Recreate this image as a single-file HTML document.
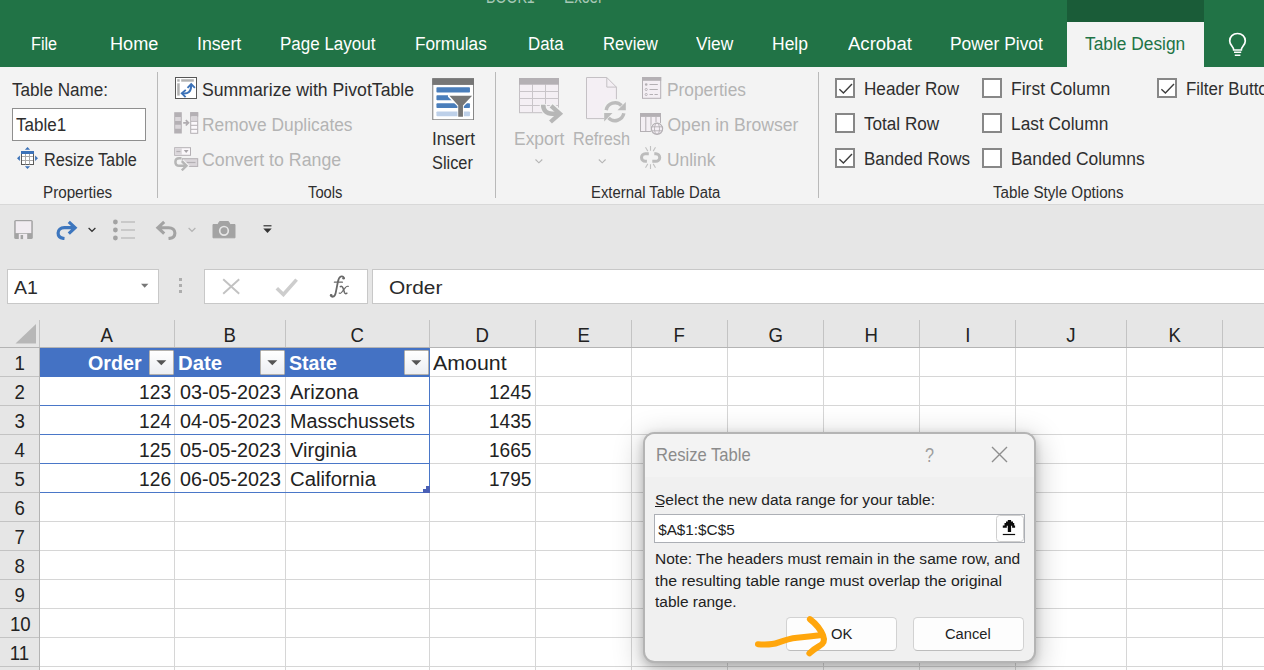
<!DOCTYPE html>
<html><head><meta charset="utf-8"><title>Excel - Resize Table</title>
<style>
html,body{margin:0;padding:0;}
body{width:1264px;height:670px;overflow:hidden;background:#e6e6e6;font-family:"Liberation Sans",sans-serif;}
#app{position:relative;width:1264px;height:670px;overflow:hidden;}
#app div.b,#app svg,#app .t{position:absolute;}
.t{white-space:nowrap;line-height:0;transform-origin:0 0;display:block;}
</style></head>
<body>
<div id="app">
<div class="b" style="left:0px;top:0px;width:1264px;height:67px;background:#217346;"></div>
<div class="b" style="left:1067px;top:0px;width:137px;height:22px;background:#1a5c38;"></div>
<div class="b" style="left:1067px;top:22px;width:137px;height:46px;background:#f3f3f3;"></div>
<span class="t" style="left:485.65px;top:-3.11px;font-size:17.60px;color:#a6c7b5;transform:scaleX(0.8030);">BOOK1</span>
<span class="t" style="left:564.05px;top:-3.11px;font-size:17.60px;color:#a6c7b5;transform:scaleX(0.8668);">Excel</span>
<span class="t" style="left:31.25px;top:43.89px;font-size:17.60px;color:#ffffff;transform:scaleX(0.9205);">File</span>
<span class="t" style="left:109.85px;top:43.89px;font-size:17.60px;color:#ffffff;transform:scaleX(1.0307);">Home</span>
<span class="t" style="left:197.05px;top:43.89px;font-size:17.60px;color:#ffffff;transform:scaleX(1.0064);">Insert</span>
<span class="t" style="left:280.45px;top:43.89px;font-size:17.60px;color:#ffffff;transform:scaleX(0.9652);">Page Layout</span>
<span class="t" style="left:415.35px;top:43.89px;font-size:17.60px;color:#ffffff;transform:scaleX(0.9788);">Formulas</span>
<span class="t" style="left:527.65px;top:43.89px;font-size:17.60px;color:#ffffff;transform:scaleX(0.9573);">Data</span>
<span class="t" style="left:602.95px;top:43.89px;font-size:17.60px;color:#ffffff;transform:scaleX(0.9487);">Review</span>
<span class="t" style="left:695.95px;top:43.89px;font-size:17.60px;color:#ffffff;transform:scaleX(0.9848);">View</span>
<span class="t" style="left:772.35px;top:43.89px;font-size:17.60px;color:#ffffff;transform:scaleX(0.9944);">Help</span>
<span class="t" style="left:847.75px;top:43.89px;font-size:17.60px;color:#ffffff;transform:scaleX(1.0536);">Acrobat</span>
<span class="t" style="left:950.45px;top:43.89px;font-size:17.60px;color:#ffffff;transform:scaleX(0.9894);">Power Pivot</span>
<span class="t" style="left:1084.95px;top:43.89px;font-size:17.60px;color:#217346;transform:scaleX(0.9848);">Table Design</span>
<svg style="left:1226px;top:31px;" width="24" height="27" viewBox="0 0 24 27"><path d="M11.5 2.5c-4.6 0-7.8 3.4-7.8 7.4 0 2.6 1.3 4.2 2.5 5.6 1 1.200 1.500 2.100 1.500 3.500h7.600c0-1.400.5-2.300 1.500-3.500 1.200-1.400 2.500-3 2.500-5.600 0-4-3.200-7.400-7.800-7.400z" fill="none" stroke="#fff" stroke-width="1.7"/><path d="M8 21.300h7.200M8.800 24.200h5.600" stroke="#fff" stroke-width="1.600" fill="none"/></svg>
<div class="b" style="left:0px;top:67px;width:1264px;height:137px;background:#f3f3f3;"></div>
<div class="b" style="left:0px;top:204px;width:1264px;height:1px;background:#d8d8d8;"></div>
<div class="b" style="left:157px;top:72px;width:1px;height:126px;background:#b9b9b9;"></div>
<div class="b" style="left:495px;top:72px;width:1px;height:126px;background:#b9b9b9;"></div>
<div class="b" style="left:818px;top:72px;width:1px;height:126px;background:#b9b9b9;"></div>
<span class="t" style="left:12.15px;top:89.79px;font-size:17.60px;color:#2e2e2e;transform:scaleX(0.9726);">Table Name:</span>
<div class="b" style="left:12px;top:108px;width:134px;height:33px;background:#fff;border:1px solid #8f8f8f;box-sizing:border-box;"></div>
<span class="t" style="left:15.65px;top:125.39px;font-size:17.60px;color:#2e2e2e;transform:scaleX(0.9679);">Table1</span>
<span class="t" style="left:44.45px;top:159.69px;font-size:17.60px;color:#2e2e2e;transform:scaleX(0.9249);">Resize Table</span>
<span class="t" style="left:42.65px;top:192.95px;font-size:16.00px;color:#2e2e2e;transform:scaleX(0.9489);">Properties</span>
<span class="t" style="left:201.55px;top:89.79px;font-size:17.60px;color:#2e2e2e;transform:scaleX(1.0039);">Summarize with PivotTable</span>
<span class="t" style="left:202.15px;top:124.89px;font-size:17.60px;color:#b4b4b4;transform:scaleX(0.9869);">Remove Duplicates</span>
<span class="t" style="left:202.15px;top:159.69px;font-size:17.60px;color:#b4b4b4;transform:scaleX(1.0091);">Convert to Range</span>
<span class="t" style="left:308.15px;top:192.95px;font-size:16.00px;color:#2e2e2e;transform:scaleX(0.9238);">Tools</span>
<span class="t" style="left:432.15px;top:139.19px;font-size:17.60px;color:#2e2e2e;transform:scaleX(0.9769);">Insert</span>
<span class="t" style="left:432.25px;top:162.99px;font-size:17.60px;color:#2e2e2e;transform:scaleX(0.9292);">Slicer</span>
<span class="t" style="left:513.75px;top:139.19px;font-size:17.60px;color:#b4b4b4;transform:scaleX(0.9909);">Export</span>
<span class="t" style="left:573.45px;top:139.19px;font-size:17.60px;color:#b4b4b4;transform:scaleX(0.9267);">Refresh</span>
<span class="t" style="left:667.45px;top:89.79px;font-size:17.60px;color:#b4b4b4;transform:scaleX(0.9848);">Properties</span>
<span class="t" style="left:667.45px;top:124.89px;font-size:17.60px;color:#b4b4b4;">Open in Browser</span>
<span class="t" style="left:667.45px;top:159.69px;font-size:17.60px;color:#b4b4b4;transform:scaleX(0.9889);">Unlink</span>
<span class="t" style="left:591.45px;top:192.95px;font-size:16.00px;color:#2e2e2e;transform:scaleX(0.9285);">External Table Data</span>
<span class="t" style="left:863.55px;top:88.99px;font-size:17.60px;color:#2e2e2e;transform:scaleX(0.9737);">Header Row</span>
<span class="t" style="left:863.55px;top:123.99px;font-size:17.60px;color:#2e2e2e;transform:scaleX(0.9726);">Total Row</span>
<span class="t" style="left:863.55px;top:158.99px;font-size:17.60px;color:#2e2e2e;transform:scaleX(0.9674);">Banded Rows</span>
<span class="t" style="left:1010.75px;top:88.99px;font-size:17.60px;color:#2e2e2e;transform:scaleX(0.9954);">First Column</span>
<span class="t" style="left:1010.75px;top:123.99px;font-size:17.60px;color:#2e2e2e;transform:scaleX(0.9848);">Last Column</span>
<span class="t" style="left:1010.75px;top:158.99px;font-size:17.60px;color:#2e2e2e;transform:scaleX(0.9903);">Banded Columns</span>
<span class="t" style="left:1185.65px;top:88.99px;font-size:17.60px;color:#2e2e2e;transform:scaleX(0.9612);">Filter Button</span>
<span class="t" style="left:993.25px;top:192.95px;font-size:16.00px;color:#2e2e2e;transform:scaleX(0.9474);">Table Style Options</span>
<div class="b" style="left:835px;top:78px;width:20px;height:20px;background:#fff;border:2px solid #878787;box-sizing:border-box;"><svg width="20" height="20" viewBox="0 0 20 20" style="position:absolute;left:-2px;top:-2px"><path d="M4.400 11.200l4 3.800L17 6" fill="none" stroke="#3d3d3d" stroke-width="1.400"/></svg></div>
<div class="b" style="left:835px;top:113px;width:20px;height:20px;background:#fff;border:2px solid #878787;box-sizing:border-box;"></div>
<div class="b" style="left:835px;top:148px;width:20px;height:20px;background:#fff;border:2px solid #878787;box-sizing:border-box;"><svg width="20" height="20" viewBox="0 0 20 20" style="position:absolute;left:-2px;top:-2px"><path d="M4.400 11.200l4 3.800L17 6" fill="none" stroke="#3d3d3d" stroke-width="1.400"/></svg></div>
<div class="b" style="left:982px;top:78px;width:20px;height:20px;background:#fff;border:2px solid #878787;box-sizing:border-box;"></div>
<div class="b" style="left:982px;top:113px;width:20px;height:20px;background:#fff;border:2px solid #878787;box-sizing:border-box;"></div>
<div class="b" style="left:982px;top:148px;width:20px;height:20px;background:#fff;border:2px solid #878787;box-sizing:border-box;"></div>
<div class="b" style="left:1157px;top:78px;width:20px;height:20px;background:#fff;border:2px solid #878787;box-sizing:border-box;"><svg width="20" height="20" viewBox="0 0 20 20" style="position:absolute;left:-2px;top:-2px"><path d="M4.400 11.200l4 3.800L17 6" fill="none" stroke="#3d3d3d" stroke-width="1.400"/></svg></div>
<svg style="left:16px;top:146px;" width="23" height="24" viewBox="0 0 23 24"><rect x="5.500" y="5.500" width="12" height="13" fill="#fff" stroke="#5a5a5a" stroke-width="1"/><path d="M9.500 8v10.500M13.500 8v10.500M6 10.500h11M6 14.500h11" stroke="#a9a9a9" stroke-width="1"/><rect x="5" y="5" width="13" height="3" fill="#3c72b8"/><path d="M11.500 1l2.600 2.800H8.900zM11.500 22.900l2.600-2.700H8.900zM1 12.300l2.900-2.700v5.400zM22 12.300l-2.900-2.700v5.400z" fill="#3c72b8"/></svg>
<svg style="left:174px;top:76px;" width="24" height="24" viewBox="0 0 24 24"><g transform="translate(0.5 0.5)"><rect x="1" y="1" width="21" height="21" fill="#fff" stroke="#565656" stroke-width="1"/><rect x="2.700" y="2.700" width="2.500" height="2.500" fill="#b2b2b2"/><rect x="6.700" y="2.700" width="12.600" height="2.500" fill="#b2b2b2"/><rect x="2.700" y="6.800" width="2.500" height="12.300" fill="#b2b2b2"/><g transform="translate(0 .8)"><path d="M7.600 16.100c6.200.9 9.100-1.800 9.100-8.400" fill="none" stroke="#3c72b8" stroke-width="2"/><path d="M11.300 12.600l-4 3.500 3.800 3.700" fill="none" stroke="#3c72b8" stroke-width="1.900"/><path d="M13 10.600l3.700-3.800 3.700 3.800" fill="none" stroke="#3c72b8" stroke-width="1.900"/></g></g></svg>
<svg style="left:174px;top:112px;" width="25" height="22" viewBox="0 0 25 22"><rect x=".2" y=".2" width="7.600" height="21.300" fill="#b4b0b4"/><path d="M1.200 5h5.600v4H1.200zM1.200 12.800h5.600v4H1.200z" fill="#dad6da"/><path d="M9.200 10.800h5M11.800 8.100l2.700 2.700-2.700 2.700" stroke="#b0acb0" stroke-width="1.700" fill="none"/><rect x="16.700" y=".7" width="7" height="20.600" fill="#fbf8fb" stroke="#b4b0b4" stroke-width="1"/><rect x="16.200" y=".2" width="8" height="4.300" fill="#b4b0b4"/><rect x="17.200" y="4.900" width="6" height="3.900" fill="#dad6da"/><path d="M17 9.300h6.500M17 13.300h6.500M17 17.300h6.500" stroke="#b4b0b4" stroke-width="1"/></svg>
<svg style="left:174px;top:147px;" width="25" height="24" viewBox="0 0 25 24"><rect x=".7" y=".7" width="15.800" height="7.600" fill="#fbf8fb" stroke="#b4b0b4" stroke-width="1"/><rect x="1.200" y="1.200" width="6.600" height="6.600" fill="#dad6da"/><path d="M2.400 4.500h4" stroke="#b4b0b4" stroke-width="1.200"/><path d="M9.800 3.100h4.800l-2.400 2.900z" fill="#a9a5a9"/><rect x="8.200" y="11.700" width="15.500" height="7.700" fill="#dad6da" stroke="#b4b0b4" stroke-width="1"/><path d="M12.500 15.500h9" stroke="#b4b0b4" stroke-width="1.200"/><path d="M7.500 11.300H5.300c-2.400 0-3.900 1.600-3.900 3.700s1.500 3.800 3.900 3.800h6" fill="none" stroke="#f3f3f3" stroke-width="4.600"/><path d="M7.800 14l4.800 4.700-4.800 4.600" fill="none" stroke="#f3f3f3" stroke-width="4.400"/><path d="M7.500 11.300H5.300c-2.400 0-3.900 1.600-3.900 3.700s1.500 3.800 3.900 3.800h6" fill="none" stroke="#b6b6b6" stroke-width="2.500"/><path d="M7.800 14.200l4.700 4.600-4.700 4.500" fill="none" stroke="#b6b6b6" stroke-width="2.400"/></svg>
<svg style="left:431.5px;top:77.5px;" width="42.4" height="42.6" viewBox="0 0 43 43" preserveAspectRatio="none"><rect x=".8" y=".8" width="41.400" height="41.400" fill="#fff" stroke="#7a7a7a" stroke-width="1"/><rect x=".3" y=".3" width="42.400" height="6.700" fill="#767676"/><g fill="#4a7ebb"><rect x="4.500" y="9.400" width="34" height="5.200" rx=".8"/><rect x="4.500" y="17.400" width="34" height="5" rx=".8"/><rect x="4.500" y="25.600" width="34" height="4.800" rx=".8"/></g><rect x="4.500" y="33.800" width="34" height="4.800" rx=".8" fill="#bdd0e9"/><path d="M16.200 16.700h25.500v2.300l-9.400 9.600v11.300h-6.500V28.600l-9.600-9.600z" fill="#fff"/><path d="M17.700 17.800h23L31.400 27.700v11.500h-4.800V27.700z" fill="#767676"/></svg>
<svg style="left:518px;top:77px;" width="47" height="47.5" viewBox="0 0 47 47.5"><g transform="translate(0.5 0.5)"><rect x="1" y="1" width="39" height="34.200" fill="#f4eff4" stroke="#c4c0c4" stroke-width="1"/><path d="M14 7v28M27 7v28M1 14h39M1 21h39M1 28h39" stroke="#c9c5c9" stroke-width="1"/><rect x=".5" y=".5" width="40" height="6.700" fill="#b4b0b4"/><path d="M24.700 26.500c0 6 3.300 9.700 9 9.700h7M32 27.500l9.500 8.700-9.800 8.700" fill="none" stroke="#f3f3f3" stroke-width="7"/><path d="M24.700 27.300c0 5.600 3.300 8.900 9 8.900h6.500" fill="none" stroke="#b7b7b7" stroke-width="4.600"/><path d="M32.600 28.400l8.800 7.800-9.400 8.300" fill="none" stroke="#b7b7b7" stroke-width="4.300"/></g></svg>
<svg style="left:585px;top:76px;" width="43" height="48" viewBox="0 0 43 48"><g transform="translate(0.5 0.5)"><path d="M1 1h20.300l9.600 9.600v31.500H1z" fill="#f4eff4" stroke="#c4c0c4" stroke-width="1"/><path d="M21.300 1v9.600H31" fill="none" stroke="#c4c0c4" stroke-width="1"/><circle cx="29.500" cy="35.200" r="12.600" fill="#f3f3f3"/><path d="M20.700 33.600a9 9 0 0 1 15.300-4.600" fill="none" stroke="#bcbcbc" stroke-width="3.500"/><path d="M38.300 36.800a9 9 0 0 1-15.300 4.600" fill="none" stroke="#bcbcbc" stroke-width="3.500"/><path d="M40.300 25.500v8.300h-8.300z" fill="#bcbcbc"/><path d="M18.700 44.900v-8.300h8.300z" fill="#bcbcbc"/></g></svg>
<svg style="left:534px;top:158px;" width="10" height="7" viewBox="0 0 10 7"><g transform="translate(0.5 0.5)"><path d="M1 1l3.400 3.300L7.800 1" fill="none" stroke="#b5b5b5" stroke-width="1.100"/></g></svg>
<svg style="left:597px;top:158px;" width="10" height="7" viewBox="0 0 10 7"><g transform="translate(0.8 0.5)"><path d="M1 1l3.400 3.300L7.800 1" fill="none" stroke="#b5b5b5" stroke-width="1.100"/></g></svg>
<svg style="left:641px;top:76px;" width="21.5" height="24" viewBox="0 0 21.5 24"><g transform="translate(0.5 0.5)"><rect x="1" y="1" width="18.200" height="20.800" fill="#f4eff4" stroke="#b4b0b4" stroke-width="1"/><rect x=".5" y=".5" width="19.200" height="3.800" fill="#b4b0b4"/><circle cx="4.700" cy="8" r="1.300" fill="#b4b0b4"/><circle cx="4.700" cy="13" r="1.100" fill="none" stroke="#b4b0b4" stroke-width=".9"/><circle cx="4.700" cy="18" r="1.100" fill="none" stroke="#b4b0b4" stroke-width=".9"/><path d="M8 8h8.300M8 13h8.300M8 18h3.500M13 18h3.300" stroke="#b4b0b4" stroke-width="1.100"/></g></svg>
<svg style="left:639px;top:112px;" width="25.5" height="24" viewBox="0 0 25.5 24"><g transform="translate(0.5 0.5)"><rect x="1" y="1" width="20" height="18" fill="#f4eff4" stroke="#b4b0b4" stroke-width="1"/><rect x=".5" y=".5" width="21" height="3.900" fill="#b4b0b4"/><path d="M6.300 4.500v14.300M11.500 4.500v14.300M16.500 4.500v14.300" stroke="#b4b0b4" stroke-width="1"/><circle cx="17.500" cy="16.300" r="6.800" fill="#f3f3f3"/><circle cx="17.500" cy="16.300" r="5.600" fill="#f4eff4" stroke="#b4b0b4" stroke-width="1.200"/><ellipse cx="17.500" cy="16.300" rx="2.500" ry="5.600" fill="none" stroke="#b4b0b4" stroke-width=".9"/><path d="M12 14.300h11M12 18.300h11" stroke="#b4b0b4" stroke-width=".9"/></g></svg>
<svg style="left:639px;top:145px;" width="23.5" height="25" viewBox="0 0 23.5 25"><g transform="translate(0.5 0.5)"><path d="M9.300 8.200H5.800a3.800 3.800 0 0 0 0 7.600h1.600" fill="none" stroke="#bcbcbc" stroke-width="3"/><path d="M12.800 15.800h3.600a3.800 3.800 0 0 0 0-7.600h-1.600" fill="none" stroke="#bcbcbc" stroke-width="3"/><path d="M11 .6v4.600M6 1.800l2.300 3.800M16 1.800l-2.300 3.800M11 23.400v-4.600M6 22.200l2.300-3.800M16 22.200l-2.300-3.800" stroke="#c2c2c2" stroke-width="1.100"/></g></svg>
<svg style="left:13px;top:219px;" width="22" height="22" viewBox="0 0 22 22"><rect x="1.200" y=".9" width="18.600" height="19.200" rx="1.600" fill="#a3a3a3"/><rect x="2.700" y="2.200" width="15.600" height="11.900" fill="#f1ecf1"/><rect x="5.800" y="14.800" width="8.400" height="5.300" fill="#efeaef"/><rect x="7.600" y="16" width="2.500" height="4.100" fill="#a3a3a3"/></svg>
<svg style="left:54px;top:219px;" width="26" height="24" viewBox="0 0 26 24"><path d="M14.800 2.800l6.300 5.900-6.300 5.900M20.500 8.700H10.300c-3.700 0-6.200 2.300-6.200 5.400 0 3 2.200 5 5.200 5.300l1.200.1" fill="none" stroke="#3d76be" stroke-width="3.200" stroke-linejoin="miter"/></svg>
<svg style="left:87px;top:226px;" width="10" height="8" viewBox="0 0 10 8"><path d="M1.600 2l3.400 3.300L8.400 2" fill="none" stroke="#333" stroke-width="1.200"/></svg>
<svg style="left:112px;top:218px;" width="25" height="24" viewBox="0 0 25 24"><g fill="#a3a3a3"><circle cx="3.400" cy="4" r="2.400"/><circle cx="3.400" cy="12" r="2.400"/><circle cx="3.400" cy="20" r="2.400"/></g><path d="M9 4h14M9 12h14M9 20h14" stroke="#ababab" stroke-width="1.200"/></svg>
<svg style="left:154px;top:219px;" width="26" height="24" viewBox="0 0 26 24"><path d="M10.200 2.800L3.900 8.700l6.300 5.900M4.500 8.700h10.200c3.700 0 6.200 2.300 6.200 5.400 0 3-2.200 5-5.200 5.300l-1.200.1" fill="none" stroke="#a3a3a3" stroke-width="3.100"/></svg>
<svg style="left:187px;top:226px;" width="10" height="8" viewBox="0 0 10 8"><path d="M1.600 2l3.400 3.300L8.400 2" fill="none" stroke="#b5b5b5" stroke-width="1.200"/></svg>
<svg style="left:212px;top:220px;" width="24" height="20" viewBox="0 0 24 20"><path d="M1 4.500h4.800l1.800-3h8.800l1.800 3H23v13.300H1z" fill="#a3a3a3" stroke="#a3a3a3" stroke-linejoin="round" stroke-width="1"/><circle cx="12" cy="10.800" r="4.300" fill="none" stroke="#e6e6e6" stroke-width="1.700"/></svg>
<svg style="left:262px;top:224px;" width="11" height="11" viewBox="0 0 11 11"><path d="M1.500 1.800h8" stroke="#333" stroke-width="1.200"/><path d="M1.300 4.500h8.400L5.500 9z" fill="#333"/></svg>
<div class="b" style="left:7px;top:269px;width:151.5px;height:35px;border:1px solid #c8c8c8;box-sizing:border-box;background:#fff;"></div>
<span class="t" style="left:13.95px;top:287.78px;font-size:18.80px;color:#2a2a2a;transform:scaleX(1.0395);">A1</span>
<svg style="left:140px;top:283px;" width="10" height="6" viewBox="0 0 10 6"><path d="M1 .8h7.400L4.700 4.800z" fill="#777"/></svg>
<div class="b" style="left:179px;top:278px;width:3px;height:3px;background:#adadad;"></div>
<div class="b" style="left:179px;top:284px;width:3px;height:3px;background:#adadad;"></div>
<div class="b" style="left:179px;top:290px;width:3px;height:3px;background:#adadad;"></div>
<div class="b" style="left:204px;top:269px;width:164px;height:35px;border:1px solid #c8c8c8;box-sizing:border-box;background:#fff;"></div>
<svg style="left:221px;top:277px;" width="22" height="19" viewBox="0 0 22 19"><path d="M2.200 2.200l16 14.600M18.200 2.200l-16 14.600" stroke="#c2c2c2" stroke-width="1.900" fill="none"/></svg>
<svg style="left:275px;top:277px;" width="24" height="20" viewBox="0 0 24 20"><path d="M1.800 11.200l6.600 6.300L21.600 2.600" stroke="#cdcdcd" stroke-width="3.600" fill="none"/></svg>
<svg style="left:328px;top:273px;" width="24" height="26" viewBox="0 0 24 26"><g fill="none" stroke="#686868" stroke-linecap="round"><path d="M15.800 5.100c-.3-1.500-1.700-2.100-3-1.600-1.700.7-2.400 2.700-2.900 5.200L7.700 19.800c-.5 2.300-1.300 3.700-2.800 3.900-1.100.2-1.900-.4-2.100-1.300" stroke-width="1.800"/><path d="M6.400 9.200h8" stroke-width="1.300"/><path d="M12.300 13.600c1.300-.7 2.200 0 2.700 1.500l1.500 4.300c.5 1.300 1.300 1.600 2.400.8" stroke-width="1.500"/><path d="M20.200 13.400c-1.100-.5-2 .1-3 1.400l-3.700 4.700c-.8 1-1.500 1.100-2.300.6" stroke-width="1.200"/></g><circle cx="15.600" cy="5.300" r="1.300" fill="#686868"/><circle cx="3.200" cy="22.200" r="1.300" fill="#686868"/></svg>
<div class="b" style="left:372px;top:269px;width:898px;height:35px;border:1px solid #c8c8c8;box-sizing:border-box;background:#fff;"></div>
<span class="t" style="left:389.05px;top:287.78px;font-size:18.80px;color:#2a2a2a;transform:scaleX(1.1113);">Order</span>
<div class="b" style="left:39.5px;top:347.5px;width:1224.5px;height:322.5px;background:#fff;"></div>
<div class="b" style="left:39px;top:320px;width:1px;height:27px;background:#c3c3c3;"></div>
<div class="b" style="left:174px;top:320px;width:1px;height:27px;background:#c3c3c3;"></div>
<div class="b" style="left:285px;top:320px;width:1px;height:27px;background:#c3c3c3;"></div>
<div class="b" style="left:429px;top:320px;width:1px;height:27px;background:#c3c3c3;"></div>
<div class="b" style="left:535px;top:320px;width:1px;height:27px;background:#c3c3c3;"></div>
<div class="b" style="left:631px;top:320px;width:1px;height:27px;background:#c3c3c3;"></div>
<div class="b" style="left:727px;top:320px;width:1px;height:27px;background:#c3c3c3;"></div>
<div class="b" style="left:823px;top:320px;width:1px;height:27px;background:#c3c3c3;"></div>
<div class="b" style="left:919px;top:320px;width:1px;height:27px;background:#c3c3c3;"></div>
<div class="b" style="left:1015px;top:320px;width:1px;height:27px;background:#c3c3c3;"></div>
<div class="b" style="left:1126px;top:320px;width:1px;height:27px;background:#c3c3c3;"></div>
<div class="b" style="left:1222px;top:320px;width:1px;height:27px;background:#c3c3c3;"></div>
<div class="b" style="left:0px;top:347px;width:1264px;height:1px;background:#b4b4b4;"></div>
<div class="b" style="left:39px;top:347px;width:1px;height:323px;background:#b4b4b4;"></div>
<svg style="left:15px;top:324px;" width="22" height="20" viewBox="0 0 22 20"><path d="M21 0v19.500H.5z" fill="#b7b7b7"/></svg>
<span class="t" style="left:100.28px;top:335.06px;font-size:20.00px;color:#222222;transform:scaleX(.93);transform-origin:50% 0;">A</span>
<span class="t" style="left:223.28px;top:335.06px;font-size:20.00px;color:#222222;transform:scaleX(.93);transform-origin:50% 0;">B</span>
<span class="t" style="left:350.23px;top:335.06px;font-size:20.00px;color:#222222;transform:scaleX(.93);transform-origin:50% 0;">C</span>
<span class="t" style="left:475.23px;top:335.06px;font-size:20.00px;color:#222222;transform:scaleX(.93);transform-origin:50% 0;">D</span>
<span class="t" style="left:576.78px;top:335.06px;font-size:20.00px;color:#222222;transform:scaleX(.93);transform-origin:50% 0;">E</span>
<span class="t" style="left:673.34px;top:335.06px;font-size:20.00px;color:#222222;transform:scaleX(.93);transform-origin:50% 0;">F</span>
<span class="t" style="left:767.67px;top:335.06px;font-size:20.00px;color:#222222;transform:scaleX(.93);transform-origin:50% 0;">G</span>
<span class="t" style="left:864.23px;top:335.06px;font-size:20.00px;color:#222222;transform:scaleX(.93);transform-origin:50% 0;">H</span>
<span class="t" style="left:964.67px;top:335.06px;font-size:20.00px;color:#222222;transform:scaleX(.93);transform-origin:50% 0;">I</span>
<span class="t" style="left:1065.95px;top:335.06px;font-size:20.00px;color:#222222;transform:scaleX(.93);transform-origin:50% 0;">J</span>
<span class="t" style="left:1167.78px;top:335.06px;font-size:20.00px;color:#222222;transform:scaleX(.93);transform-origin:50% 0;">K</span>
<div class="b" style="left:174px;top:348px;width:1px;height:322px;background:#d6d6d6;"></div>
<div class="b" style="left:285px;top:348px;width:1px;height:322px;background:#d6d6d6;"></div>
<div class="b" style="left:429px;top:348px;width:1px;height:322px;background:#d6d6d6;"></div>
<div class="b" style="left:535px;top:348px;width:1px;height:322px;background:#d6d6d6;"></div>
<div class="b" style="left:631px;top:348px;width:1px;height:322px;background:#d6d6d6;"></div>
<div class="b" style="left:727px;top:348px;width:1px;height:322px;background:#d6d6d6;"></div>
<div class="b" style="left:823px;top:348px;width:1px;height:322px;background:#d6d6d6;"></div>
<div class="b" style="left:919px;top:348px;width:1px;height:322px;background:#d6d6d6;"></div>
<div class="b" style="left:1015px;top:348px;width:1px;height:322px;background:#d6d6d6;"></div>
<div class="b" style="left:1126px;top:348px;width:1px;height:322px;background:#d6d6d6;"></div>
<div class="b" style="left:1222px;top:348px;width:1px;height:322px;background:#d6d6d6;"></div>
<div class="b" style="left:40px;top:376px;width:1224px;height:1px;background:#d6d6d6;"></div>
<div class="b" style="left:0px;top:376px;width:39px;height:1px;background:#c3c3c3;"></div>
<div class="b" style="left:40px;top:405px;width:1224px;height:1px;background:#d6d6d6;"></div>
<div class="b" style="left:0px;top:405px;width:39px;height:1px;background:#c3c3c3;"></div>
<div class="b" style="left:40px;top:434px;width:1224px;height:1px;background:#d6d6d6;"></div>
<div class="b" style="left:0px;top:434px;width:39px;height:1px;background:#c3c3c3;"></div>
<div class="b" style="left:40px;top:463px;width:1224px;height:1px;background:#d6d6d6;"></div>
<div class="b" style="left:0px;top:463px;width:39px;height:1px;background:#c3c3c3;"></div>
<div class="b" style="left:40px;top:492px;width:1224px;height:1px;background:#d6d6d6;"></div>
<div class="b" style="left:0px;top:492px;width:39px;height:1px;background:#c3c3c3;"></div>
<div class="b" style="left:40px;top:521px;width:1224px;height:1px;background:#d6d6d6;"></div>
<div class="b" style="left:0px;top:521px;width:39px;height:1px;background:#c3c3c3;"></div>
<div class="b" style="left:40px;top:550px;width:1224px;height:1px;background:#d6d6d6;"></div>
<div class="b" style="left:0px;top:550px;width:39px;height:1px;background:#c3c3c3;"></div>
<div class="b" style="left:40px;top:579px;width:1224px;height:1px;background:#d6d6d6;"></div>
<div class="b" style="left:0px;top:579px;width:39px;height:1px;background:#c3c3c3;"></div>
<div class="b" style="left:40px;top:608px;width:1224px;height:1px;background:#d6d6d6;"></div>
<div class="b" style="left:0px;top:608px;width:39px;height:1px;background:#c3c3c3;"></div>
<div class="b" style="left:40px;top:637px;width:1224px;height:1px;background:#d6d6d6;"></div>
<div class="b" style="left:0px;top:637px;width:39px;height:1px;background:#c3c3c3;"></div>
<div class="b" style="left:40px;top:666px;width:1224px;height:1px;background:#d6d6d6;"></div>
<div class="b" style="left:0px;top:666px;width:39px;height:1px;background:#c3c3c3;"></div>
<span class="t" style="left:14.31px;top:362.76px;font-size:20.30px;color:#222222;transform:scaleX(.92);transform-origin:50% 0;">1</span>
<span class="t" style="left:14.31px;top:391.76px;font-size:20.30px;color:#222222;transform:scaleX(.92);transform-origin:50% 0;">2</span>
<span class="t" style="left:14.31px;top:420.76px;font-size:20.30px;color:#222222;transform:scaleX(.92);transform-origin:50% 0;">3</span>
<span class="t" style="left:14.31px;top:449.76px;font-size:20.30px;color:#222222;transform:scaleX(.92);transform-origin:50% 0;">4</span>
<span class="t" style="left:14.31px;top:478.76px;font-size:20.30px;color:#222222;transform:scaleX(.92);transform-origin:50% 0;">5</span>
<span class="t" style="left:14.31px;top:507.76px;font-size:20.30px;color:#222222;transform:scaleX(.92);transform-origin:50% 0;">6</span>
<span class="t" style="left:14.31px;top:536.76px;font-size:20.30px;color:#222222;transform:scaleX(.92);transform-origin:50% 0;">7</span>
<span class="t" style="left:14.31px;top:565.76px;font-size:20.30px;color:#222222;transform:scaleX(.92);transform-origin:50% 0;">8</span>
<span class="t" style="left:14.31px;top:594.76px;font-size:20.30px;color:#222222;transform:scaleX(.92);transform-origin:50% 0;">9</span>
<span class="t" style="left:8.66px;top:623.76px;font-size:20.30px;color:#222222;transform:scaleX(.92);transform-origin:50% 0;">10</span>
<span class="t" style="left:9.41px;top:652.76px;font-size:20.30px;color:#222222;transform:scaleX(.92);transform-origin:50% 0;">11</span>
<div class="b" style="left:40px;top:348px;width:389.5px;height:29px;background:#4472c4;"></div>
<div class="b" style="left:40px;top:405px;width:390px;height:1px;background:#4a77c8;"></div>
<div class="b" style="left:40px;top:434px;width:390px;height:1px;background:#4a77c8;"></div>
<div class="b" style="left:40px;top:463px;width:390px;height:1px;background:#4a77c8;"></div>
<div class="b" style="left:40px;top:492px;width:390px;height:1px;background:#4a77c8;"></div>
<div class="b" style="left:429px;top:348px;width:1px;height:145px;background:#4a77c8;"></div>
<div class="b" style="left:423px;top:489px;width:7px;height:4px;background:#4a60b6;"></div>
<div class="b" style="left:426px;top:486px;width:4px;height:3px;background:#4a60b6;"></div>
<span class="t" style="left:87.95px;top:363.00px;font-size:19.60px;color:#fff;transform:scaleX(1.0043);font-weight:bold;">Order</span>
<span class="t" style="left:178.25px;top:363.00px;font-size:19.60px;color:#fff;transform:scaleX(1.0378);font-weight:bold;">Date</span>
<span class="t" style="left:288.95px;top:363.00px;font-size:19.60px;color:#fff;font-weight:bold;">State</span>
<span class="t" style="left:433.15px;top:363.00px;font-size:19.60px;color:#222222;transform:scaleX(1.0912);">Amount</span>
<div class="b" style="left:149.2px;top:350px;width:24.5px;height:25px;background:linear-gradient(#ffffff,#eceef2);border:1px solid #b3b1ad;box-sizing:border-box;border-radius:1px;"><svg width="11" height="6" viewBox="0 0 11 6" style="position:absolute;left:6.200px;top:9px"><path d="M.3.300h10L5.300 5.300z" fill="#555"/></svg></div>
<div class="b" style="left:260.1px;top:350px;width:24.5px;height:25px;background:linear-gradient(#ffffff,#eceef2);border:1px solid #b3b1ad;box-sizing:border-box;border-radius:1px;"><svg width="11" height="6" viewBox="0 0 11 6" style="position:absolute;left:6.200px;top:9px"><path d="M.3.300h10L5.300 5.300z" fill="#555"/></svg></div>
<div class="b" style="left:404.2px;top:350px;width:24.5px;height:25px;background:linear-gradient(#ffffff,#eceef2);border:1px solid #b3b1ad;box-sizing:border-box;border-radius:1px;"><svg width="11" height="6" viewBox="0 0 11 6" style="position:absolute;left:6.200px;top:9px"><path d="M.3.300h10L5.300 5.300z" fill="#555"/></svg></div>
<span class="t" style="left:138.85px;top:392.00px;font-size:19.60px;color:#222222;transform:scaleX(0.9819);">123</span>
<span class="t" style="left:180.25px;top:392.00px;font-size:19.60px;color:#222222;transform:scaleX(1.0074);">03-05-2023</span>
<span class="t" style="left:289.65px;top:392.00px;font-size:19.60px;color:#222222;transform:scaleX(1.0303);">Arizona</span>
<span class="t" style="left:489.15px;top:392.00px;font-size:19.60px;color:#222222;transform:scaleX(0.9745);">1245</span>
<span class="t" style="left:138.85px;top:421.00px;font-size:19.60px;color:#222222;transform:scaleX(0.9819);">124</span>
<span class="t" style="left:180.25px;top:421.00px;font-size:19.60px;color:#222222;transform:scaleX(1.0074);">04-05-2023</span>
<span class="t" style="left:289.65px;top:421.00px;font-size:19.60px;color:#222222;transform:scaleX(1.0059);">Masschussets</span>
<span class="t" style="left:489.15px;top:421.00px;font-size:19.60px;color:#222222;transform:scaleX(0.9745);">1435</span>
<span class="t" style="left:138.85px;top:450.00px;font-size:19.60px;color:#222222;transform:scaleX(0.9819);">125</span>
<span class="t" style="left:180.25px;top:450.00px;font-size:19.60px;color:#222222;transform:scaleX(1.0074);">05-05-2023</span>
<span class="t" style="left:289.65px;top:450.00px;font-size:19.60px;color:#222222;transform:scaleX(1.0256);">Virginia</span>
<span class="t" style="left:489.15px;top:450.00px;font-size:19.60px;color:#222222;transform:scaleX(0.9745);">1665</span>
<span class="t" style="left:138.85px;top:479.00px;font-size:19.60px;color:#222222;transform:scaleX(0.9819);">126</span>
<span class="t" style="left:180.25px;top:479.00px;font-size:19.60px;color:#222222;transform:scaleX(1.0074);">06-05-2023</span>
<span class="t" style="left:289.65px;top:479.00px;font-size:19.60px;color:#222222;transform:scaleX(1.0385);">California</span>
<span class="t" style="left:489.15px;top:479.00px;font-size:19.60px;color:#222222;transform:scaleX(0.9745);">1795</span>
<div class="b" style="left:643px;top:432px;width:393px;height:231px;background:#f0f0f0;border:2px solid #b4b4b4;box-sizing:border-box;border-radius:11.500px;box-shadow:0 7px 28px 3px rgba(0,0,0,.21),0 3px 9px rgba(0,0,0,.19);overflow:hidden;"><div style="position:absolute;left:0;top:0;right:0;height:42.500px;background:#f3f3f3"></div></div>
<span class="t" style="left:655.95px;top:454.72px;font-size:17.80px;color:#8b8b8b;transform:scaleX(0.9332);">Resize Table</span>
<span class="t" style="left:925.05px;top:454.79px;font-size:20.50px;color:#9e9e9e;transform:scaleX(0.7896);">?</span>
<svg style="left:990px;top:445px;" width="19" height="19" viewBox="0 0 19 19"><path d="M2 2l15 15M17 2L2 17" stroke="#8e8e8e" stroke-width="1.400" fill="none"/></svg>
<span class="t" style="left:654.55px;top:499.79px;font-size:15.30px;color:#222222;transform:scaleX(1.0161);">Select the new data range for your table:</span>
<div class="b" style="left:654.9px;top:506px;width:8.8px;height:1.4px;background:#1a1a1a;"></div>
<div class="b" style="left:654px;top:514px;width:371px;height:29px;background:#fff;border:1px solid #acafb5;box-sizing:border-box;"></div>
<span class="t" style="left:658.15px;top:529.69px;font-size:15.30px;color:#222222;">$A$1:$C$5</span>
<div class="b" style="left:996px;top:515px;width:28px;height:27px;background:#fdfdfd;border:1px solid #cfcfcf;box-sizing:border-box;border-radius:3.500px;"></div>
<svg style="left:1002px;top:519px;" width="15" height="18" viewBox="0 0 15 18"><path d="M5.800.9h3.300v1.600h1.900V4h1.200v2.500h.9v2.300h-3V6.700h-1v6.200H5.800V6.700h-1v2.100H.8V6.500h1.700V4H4V2.500h1.800z" fill="#0a0a0a"/><rect x=".8" y="14.900" width="12.300" height="1.200" fill="#0a0a0a"/></svg>
<span class="t" style="left:654.55px;top:559.39px;font-size:15.30px;color:#222222;transform:scaleX(1.0139);">Note: The headers must remain in the same row, and</span>
<span class="t" style="left:654.55px;top:580.59px;font-size:15.30px;color:#222222;transform:scaleX(1.0361);">the resulting table range must overlap the original</span>
<span class="t" style="left:654.55px;top:601.79px;font-size:15.30px;color:#222222;transform:scaleX(1.0097);">table range.</span>
<div class="b" style="left:786px;top:617px;width:111px;height:34px;background:#fdfdfd;border:1px solid #d2d2d2;border-bottom-color:#bdbdbd;box-sizing:border-box;border-radius:4.500px;"></div>
<div class="b" style="left:913px;top:617px;width:111px;height:34px;background:#fdfdfd;border:1px solid #d2d2d2;border-bottom-color:#bdbdbd;box-sizing:border-box;border-radius:4.500px;"></div>
<span class="t" style="left:830.95px;top:634.39px;font-size:15.30px;color:#222222;transform:scaleX(0.9680);">OK</span>
<span class="t" style="left:945.15px;top:634.39px;font-size:15.30px;color:#222222;transform:scaleX(0.9595);">Cancel</span>
<svg style="left:745px;top:605px;" width="95" height="60" viewBox="0 0 95 60"><path d="M13 39.200C20 39.700 27 39.900 33 37.600S44 33.400 52 32.700 66 31.400 75 30.200" fill="none" stroke="#ffa60c" stroke-width="6" stroke-linecap="round"/><path d="M65 14.200C70 18 75 23 78 30.500c2.400 6 .2 8.500-4 10.700-4 2.300-7 4.300-9.500 7.100" fill="none" stroke="#ffa60c" stroke-width="6.200" stroke-linecap="round" stroke-linejoin="round"/></svg>
</div>
</body></html>
